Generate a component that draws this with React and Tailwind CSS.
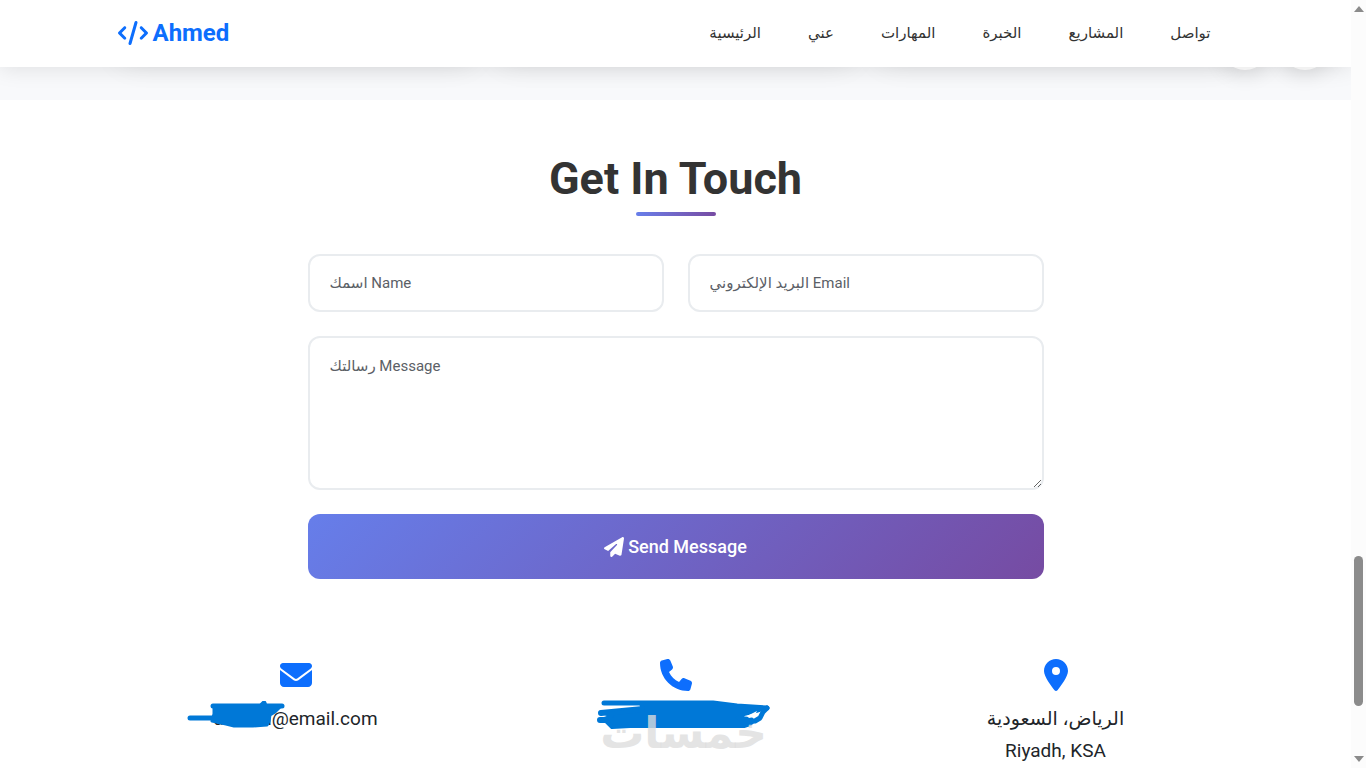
import clsx from "clsx";
import {
  FaCode,
  FaEnvelope,
  FaLocationDot,
  FaPaperPlane,
  FaPhone,
} from "react-icons/fa6";

const navLinks = [
  { href: "#home", label: "الرئيسية" },
  { href: "#about", label: "عني" },
  { href: "#skills", label: "المهارات" },
  { href: "#experience", label: "الخبرة" },
  { href: "#projects", label: "المشاريع" },
  { href: "#contact", label: "تواصل" },
];

const fieldStyles =
  "block w-full rounded-xl border-2 border-[#e9ecef] bg-white px-5 text-[15px] leading-6 text-[#212529] outline-none placeholder:text-[#5b6066] focus:border-[#667eea]";

function Navbar() {
  return (
    <header className="relative z-20 bg-white/98 shadow-[0_2px_20px_rgba(0,0,0,0.1)]">
      <div className="mx-auto flex h-[67px] max-w-[1140px] items-center justify-between px-[11px]">
        <a
          href="#home"
          className="flex items-center gap-1 pb-0.5 text-2xl font-bold text-[#0d6efd]"
        >
          <FaCode className="h-6 w-8" />
          Ahmed
        </a>

        <nav className="mr-6 flex items-center gap-[47px]">
          {navLinks.map((link) => (
            <a
              key={link.href}
              href={link.href}
              className="text-[15px] text-[#333] hover:text-[#0d6efd]"
            >
              {link.label}
            </a>
          ))}
        </nav>
      </div>
    </header>
  );
}

// Tail of the projects section, only the card shadows reach below the navbar
function ProjectsEnd() {
  return (
    <section className="relative -mt-[67px] h-[100px] overflow-hidden bg-[#f8f9fb]">
      <div className="mx-auto grid max-w-[1140px] grid-cols-3 gap-6 px-3">
        {[0, 1, 2].map((card) => (
          <div
            key={card}
            className="h-[52px] rounded-b-2xl bg-white shadow-[0_10px_30px_rgba(0,0,0,0.1)]"
          />
        ))}
      </div>
      <div className="absolute right-[21px] top-5 flex gap-2.5">
        <span className="h-[50px] w-[50px] rounded-full bg-white shadow-[0_5px_20px_rgba(0,0,0,0.1)]" />
        <span className="h-[50px] w-[50px] rounded-full bg-white shadow-[0_5px_20px_rgba(0,0,0,0.1)]" />
      </div>
    </section>
  );
}

function ContactForm() {
  return (
    <form
      className="mx-auto grid max-w-[736px] grid-cols-2 gap-6"
      onSubmit={(e) => e.preventDefault()}
    >
      <input
        type="text"
        aria-label="Name"
        placeholder="اسمك Name"
        className={clsx(fieldStyles, "h-[58px]")}
      />
      <input
        type="email"
        aria-label="Email"
        placeholder="البريد الإلكتروني Email"
        className={clsx(fieldStyles, "h-[58px]")}
      />
      <textarea
        aria-label="Message"
        placeholder="رسالتك Message"
        className={clsx(fieldStyles, "col-span-2 h-[154px] resize-y py-4")}
      />
      <button
        type="submit"
        className="col-span-2 flex h-[65px] items-center justify-center gap-1 rounded-xl bg-[linear-gradient(135deg,#667eea_0%,#764ba2_100%)] text-lg font-medium text-white"
      >
        <FaPaperPlane className="h-5 w-5" />
        Send Message
      </button>
    </form>
  );
}

function EmailScribble() {
  return (
    <svg
      viewBox="0 0 100 30"
      className="absolute -left-[26px] -top-0.5 h-[30px] w-[100px]"
      fill="none"
      stroke="#0078d7"
      strokeLinecap="round"
      strokeLinejoin="round"
    >
      <path d="M3 17H40" strokeWidth="5" />
      <path d="M26 5H95" strokeWidth="5" />
      <path d="M75 4l2-2 1 3" strokeWidth="5" />
      <path
        d="M27 5h67l-6 6-5 3-1 6-2 4-14 1H47l-8-2-14-3 2-7z"
        fill="#0078d7"
        strokeWidth="3"
      />
    </svg>
  );
}

function PhoneScribble() {
  return (
    <svg
      viewBox="0 0 176 32"
      className="h-8 w-[176px]"
      fill="none"
      stroke="#0078d7"
      strokeLinecap="round"
      strokeLinejoin="round"
    >
      <path d="M8 4h109l24 3 30 2" strokeWidth="5" />
      <path d="M5 14l42-4M4 21h30" strokeWidth="6" />
      <path
        d="M45 4h70l26 4 28 1-9 3-12 3-6 4 13 1 2 2-3 3-6 2H34l-18 1-5-5-3-3 8-3-5-2 36-4z"
        fill="#0078d7"
        strokeWidth="4"
      />
      <path d="M171 9l-4 4-3 6-5 3-13 1" strokeWidth="5" />
      <path d="M151 17l10-5-3 6-5 1z" fill="#fff" stroke="none" />
    </svg>
  );
}

function ContactItem({ icon: Icon, children }) {
  return (
    <div className="flex flex-col items-center text-center text-[19px] leading-8 text-[#212529]">
      <Icon className="mb-3 h-8 w-8 text-[#0d6efd]" />
      {children}
    </div>
  );
}

function Scrollbar() {
  return (
    <div className="flex w-[15px] shrink-0 flex-col items-center justify-between bg-[#fcfcfc] py-1.5">
      <svg viewBox="0 0 10 6" className="h-1.5 w-2.5" fill="#8b8b8b">
        <path d="M0 6L5 0l5 6z" />
      </svg>
      <div className="flex w-full flex-1 flex-col items-center">
        <div className="flex-[544]" />
        <div className="w-[9px] flex-[150] rounded-full bg-[#8b8b8b]" />
        <div className="flex-[50]" />
      </div>
      <svg viewBox="0 0 10 6" className="h-1.5 w-2.5" fill="#8b8b8b">
        <path d="M0 0l5 6 5-6z" />
      </svg>
    </div>
  );
}

export default function App() {
  return (
    <div className="flex h-screen overflow-hidden bg-white font-[Roboto,'DejaVu_Sans',sans-serif]">
      <div className="min-w-0 flex-1 overflow-hidden">
        <Navbar />
        <ProjectsEnd />

        <section id="contact" className="pt-[46px]">
          <h2 className="text-center text-[45px] leading-[66px] font-bold text-[#333]">
            Get In Touch
          </h2>
          <div className="mx-auto mb-[38px] h-1 w-20 rounded-sm bg-linear-to-r from-[#667eea] to-[#764ba2]" />

          <ContactForm />

          <div className="mx-auto mt-20 grid max-w-[1140px] grid-cols-3">
            <ContactItem icon={FaEnvelope}>
              <p className="relative">
                <span>ahmed</span>@email.com
                <EmailScribble />
              </p>
            </ContactItem>
            <ContactItem icon={FaPhone}>
              <div className="relative -mt-1 ml-4">
                <PhoneScribble />
                <span
                  lang="ar"
                  className="absolute left-0 top-3 w-[176px] text-center text-[44px] leading-[44px] font-bold text-[#ddd]/80"
                >
                  خمسات
                </span>
              </div>
            </ContactItem>
            <ContactItem icon={FaLocationDot}>
              <p>
                الرياض، السعودية
                <br />
                Riyadh, KSA
              </p>
            </ContactItem>
          </div>
        </section>
      </div>
      <Scrollbar />
    </div>
  );
}
